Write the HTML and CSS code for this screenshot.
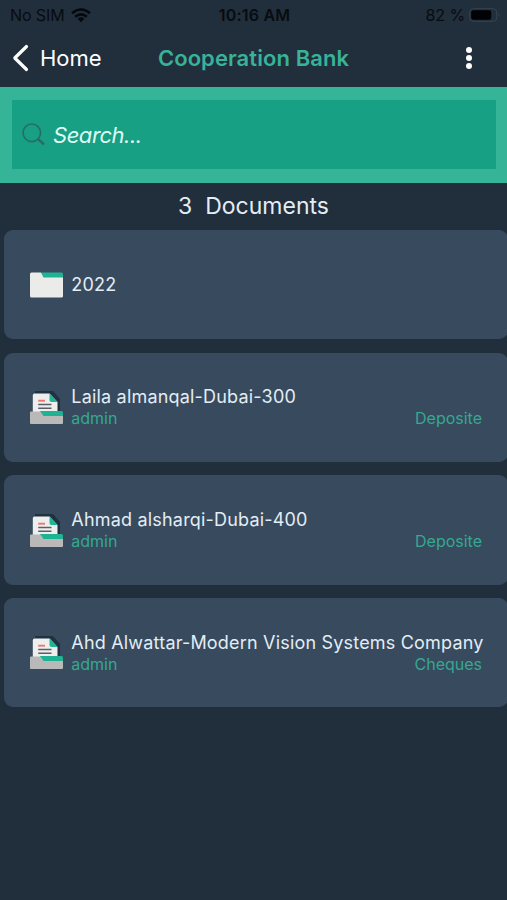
FILE: index.html
```html
<!DOCTYPE html>
<html lang="en">
<head>
<meta charset="utf-8">
<title>Cooperation Bank</title>
<link rel="stylesheet" href="styles.css">
</head>
<body>
<svg class="defs" aria-hidden="true">
  <symbol id="doc" viewBox="0 0 33 33">
    <path d="M5 0H23L30 8V21H5Z" fill="#203142"/>
    <path d="M4.500 2.500H19.500L27.500 11V24H2.800V4.500Q2.800 2.500 4.500 2.500Z" fill="#eeeeed"/>
    <path d="M19.500 2.500L27.500 11H21.500Q19.500 11 19.500 9Z" fill="#1fb593"/>
    <path d="M8.200 9.700H15" stroke="#ec7673" stroke-width="1.900"/>
    <path d="M8.200 13.500H21.500M8.200 17.300H21.500" stroke="#59606a" stroke-width="1.500"/>
    <path d="M10 20H31.500Q33 20 33 21.500V27H10Z" fill="#20b393"/>
    <path d="M1 20.500H10.500L13.500 25H33V32Q33 33 32 33H1Q0 33 0 32V21.500Q0 20.500 1 20.500Z" fill="#b9b9b9"/>
  </symbol>
</svg>
<div class="status">
  <div class="carrier"><span>No SIM</span>
    <svg width="20" height="15" viewBox="0 0 20 15" fill="none" stroke="#05090d" stroke-width="2.600"><path d="M1 5.300Q10-2.300 19 5.300M4.100 8.700Q10 4 15.900 8.700"/><path d="M6.600 10.700Q10 8 13.400 10.700L10 14.300Z" fill="#05090d" stroke="none"/></svg>
  </div>
  <span class="time">10:16 AM</span>
  <div class="power"><span>82 %</span>
    <svg width="32" height="14" viewBox="0 0 32 14"><rect x=".7" y=".7" width="27" height="12.600" rx="3.500" fill="none" stroke="#38444f"/><rect x="2.200" y="2.200" width="20" height="9.600" rx="2" fill="#000205"/><path d="M29.500 4.800Q31.500 7 29.500 9.200Z" fill="#38444f"/></svg>
  </div>
</div>
<header class="nav">
  <a class="back"><svg width="17" height="28" viewBox="0 0 17 28"><path d="M14.500 2.500L2.800 14L14.500 25.500" fill="none" stroke="#fff" stroke-width="3.200" stroke-linecap="round" stroke-linejoin="round"/></svg><span>Home</span></a>
  <h1>Cooperation Bank</h1>
  <svg class="more" width="8" height="24" viewBox="0 0 8 24" fill="#fff"><circle cx="4" cy="4" r="3"/><circle cx="4" cy="12" r="3"/><circle cx="4" cy="20" r="3"/></svg>
</header>
<div class="search"><div class="field">
  <svg width="24" height="24" viewBox="0 0 24 24" fill="none" stroke="#286d65"><circle cx="9.800" cy="9.800" r="8.800" stroke-width="1.700"/><path d="M16 16L22 21.500" stroke-width="2.500"/></svg>
  <span>Search...</span>
</div></div>
<div class="count"><span>3&nbsp; Documents</span></div>
<main class="list">
  <article class="card">
    <svg class="icon" width="33" height="26" viewBox="0 0 33 26"><path d="M10 .5H31.500Q33 .5 33 2V10H10Z" fill="#20b393"/><path d="M1.500 .5H10Q11 .5 11.600 1.700L13.500 5.500H33V24Q33 25.500 31.500 25.500H1.500Q0 25.500 0 24V2Q0 .5 1.500 .5Z" fill="#ebebea"/></svg>
    <div class="text"><div class="name"><span>2022</span></div></div>
  </article>
  <article class="card">
    <svg class="icon" width="33" height="33"><use href="#doc"/></svg>
    <div class="text"><div class="name"><span>Laila almanqal-Dubai-300</span></div><div class="meta"><span>admin</span><span>Deposite</span></div></div>
  </article>
  <article class="card">
    <svg class="icon" width="33" height="33"><use href="#doc"/></svg>
    <div class="text"><div class="name"><span>Ahmad alsharqi-Dubai-400</span></div><div class="meta"><span>admin</span><span>Deposite</span></div></div>
  </article>
  <article class="card">
    <svg class="icon" width="33" height="33"><use href="#doc"/></svg>
    <div class="text"><div class="name"><span>Ahd Alwattar-Modern Vision Systems Company</span></div><div class="meta"><span>admin</span><span>Cheques</span></div></div>
  </article>
</main>
</body>
</html>
```
FILE: styles.css
```css
* { box-sizing: border-box; }
body { margin: 0; height: 900px; overflow: hidden; background: #212e3b; color: #e3edf5; font-family: Inter, sans-serif; }
svg { display: block; flex: none; }
.defs { display: none; }
.status { display: grid; grid-template-columns: 1fr auto 1fr; align-items: center; height: 30px; padding: 0 8px 0 10px; color: #070c12; font-size: 16px; line-height: 30px; white-space: nowrap; }
.carrier, .power { display: flex; align-items: center; gap: 6px; letter-spacing: -.1px; }
.power { justify-content: flex-end; gap: 4px; margin-right: -2px; }
.time { font-weight: 600; letter-spacing: .2px; }
.nav { display: grid; grid-template-columns: 1fr auto 1fr; align-items: center; height: 57px; padding: 0 12px 2px; }
.back { display: flex; align-items: center; gap: 11px; color: #fff; font-size: 22px; }
h1 { margin: 0; color: #38b298; font-size: 22px; font-weight: 600; letter-spacing: .08px; white-space: nowrap; }
.more { justify-self: end; margin-right: 22px; }
.search { height: 96px; padding: 13px 11px 13.500px 12px; background: #35b498; }
.field { display: flex; align-items: center; gap: 7px; height: 69px; padding-left: 10px; background: #18a085; color: #dffaf4; font-size: 22px; font-style: italic; letter-spacing: -.45px; }
.count { height: 47px; line-height: 46px; text-align: center; font-size: 23px; }
.list { display: flex; flex-direction: column; gap: 13.400px; margin-right: -1px; padding-left: 3.500px; }
.card { display: flex; align-items: center; gap: 8px; height: 109.300px; padding: 0 26px 0 26.800px; border-radius: 9px; background: #384a5e; }
.text { flex: 1; min-width: 0; white-space: nowrap; }
.name { font-size: 18px; line-height: 22px; letter-spacing: .19px; }
.meta { display: flex; justify-content: space-between; color: #35a891; font-size: 16px; line-height: 20px; }
```
